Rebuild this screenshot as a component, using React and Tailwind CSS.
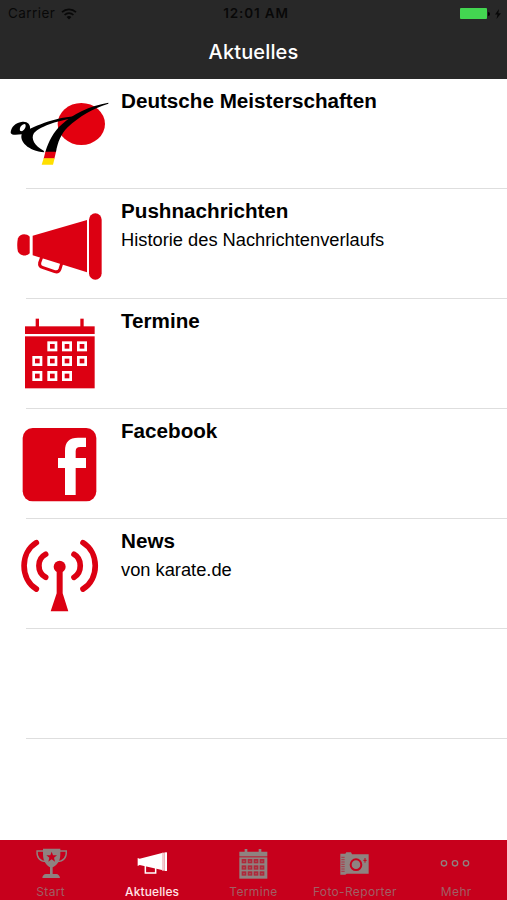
import React from "react";

function KarateLogo() {
  return (
    <svg className="w-[120px] h-[110px] shrink-0" viewBox="0 -33 360 330" aria-hidden="true">
      <ellipse cx="244" cy="102" rx="71" ry="63" fill="#e3000f" />
      <path
        fillRule="evenodd"
        d="M32 129 C32 111 47 97 68 95 C83 94 92 104 90 116 C87 126 78 134 66 133 C48 135 35 136 32 129 Z M60 122 C58 112 64 103 75 102 C80 108 75 119 66 124 Z"
        fill="#000"
      />
      <path d="M230 79 C180 80 107 104 66 130 C56 155 85 183 133 187 L131 182 C104 168 91 146 102 129 C123 107 181 90 224 84 Z" fill="#000" />
      <path d="M325 38 C270 47 216 73 186 103 C160 125 146 155 136 186 L168 186 C173 157 183 132 203 112 C239 78 277 56 325 41 Z" fill="#000" />
      <path d="M136 185 H168 L163 206 H131 Z" fill="#e3000f" />
      <path d="M131 205 H164 L159 224 H125 Z" fill="#ffdf00" />
    </svg>
  );
}

function MegaphoneIcon() {
  return (
    <svg className="w-[120px] h-[110px] shrink-0" viewBox="0 -33 360 330" fill="#dc0012" aria-hidden="true">
      <path d="M89 110 V160 C78 171 60 167 54 155 C51 145 51 125 54 115 C60 101 78 99 89 110 Z" />
      <path d="M98 107 L261 60 V217 L98 166 Z" />
      <path d="M125 172 L119 188 Q117 199 127 202 L164 215 Q176 218 180 207 L185 191" fill="none" stroke="#dc0012" strokeWidth="9" />
      <rect x="267" y="40" width="38" height="199" rx="19" />
    </svg>
  );
}

const CALENDAR_DAYS = [
  [142, 109], [186, 109], [231, 109],
  [97, 153], [142, 153], [186, 153], [231, 153],
  [97, 198], [142, 198], [186, 198],
];

function CalendarIcon() {
  return (
    <svg className="w-[120px] h-[110px] shrink-0" viewBox="0 -18 360 330" fill="#dc0012" aria-hidden="true">
      <rect x="107" y="41" width="10" height="26" />
      <rect x="241" y="41" width="10" height="26" />
      <rect x="75" y="64" width="209" height="23" />
      <rect x="75" y="94" width="209" height="156" />
      {CALENDAR_DAYS.map(([x, y]) => (
        <rect key={`${x}-${y}`} x={x + 4} y={y + 4} width="22" height="22" stroke="#fff" strokeWidth="8" />
      ))}
    </svg>
  );
}

function FacebookIcon() {
  return (
    <svg className="w-[120px] h-[110px] shrink-0" viewBox="0 -18 360 330" aria-hidden="true">
      <rect x="68" y="39" width="221" height="220" rx="30" fill="#dc0012" />
      <path d="M195 240 V159 H174 V129 H195 V108 C195 80 208 68 234 68 H258 V96 H241 C231 96 227 100 227 109 V129 H258 V159 H227 V240 Z" fill="#fff" />
    </svg>
  );
}

function AntennaIcon() {
  return (
    <svg className="w-[120px] h-[110px] shrink-0" viewBox="0 -18 360 330" fill="#dc0012" aria-hidden="true">
      <circle cx="179" cy="125" r="18" />
      <path d="M170 135 H188 V205 L205 259 H152 L170 205 Z" />
      <g fill="none" stroke="#dc0012" strokeWidth="17" strokeLinecap="round">
        <path d="M109 53 C60 83 60 162 109 192" />
        <path d="M137 88 C110 102 110 142 137 157" />
        <path d="M249 53 C298 83 298 162 249 192" />
        <path d="M222 88 C247 102 247 142 222 157" />
      </g>
    </svg>
  );
}

function TrophyTab() {
  return (
    <svg className="size-9" viewBox="0 0 108 108" aria-hidden="true">
      <path d="M30 11 H82 V27 C82 51 71 60 59 67 V87 H70 Q79 88 81 99 H28 Q29 88 39 87 H51 V67 C41 60 30 51 30 27 Z" fill="currentColor" />
      <path d="M31 18 H12 C11 38 22 49 40 50 M81 18 H100 C101 38 90 49 72 50" fill="none" stroke="currentColor" strokeWidth="4" />
      <path d="M56 20 L60 31 L72 31 L63 38 L66 50 L56 43 L46 50 L49 38 L40 31 L52 31 Z" fill="#c7001c" />
    </svg>
  );
}

function MegaphoneTab() {
  return (
    <svg className="size-9" viewBox="0 0 108 108" fill="currentColor" aria-hidden="true">
      <path d="M11 39 L17 41 L84 24 V75 L17 60 L11 63 Z" />
      <rect x="84" y="23" width="8" height="54" opacity="0.8" />
      <rect x="92" y="22" width="7" height="56" />
      <path d="M34 61 V84 H65 V69" fill="none" stroke="currentColor" strokeWidth="4.5" />
    </svg>
  );
}

function CalendarTab() {
  return (
    <svg className="size-9" viewBox="0 0 108 108" fill="currentColor" aria-hidden="true">
      <path d="M29 12 H37 V20 H71 V12 H79 V20 H97 V34 H13 V20 H29 Z" />
      <rect x="13" y="34" width="84" height="3" opacity="0.4" />
      <rect x="13" y="37" width="84" height="64" />
      {[42, 61, 79].map((y) =>
        [20, 38, 56, 74].map((x) => (
          <g key={`${x}-${y}`}>
            <rect x={x} y={y} width="14" height="13" fill="#b0283a" />
            <rect x={x + 5} y={y + 5} width="4" height="4" opacity="0.6" />
          </g>
        ))
      )}
    </svg>
  );
}

function CameraTab() {
  return (
    <svg className="size-9" viewBox="0 0 108 108" fill="currentColor" aria-hidden="true">
      <path d="M10 26 H25 L28 22 H42 L45 28 H95 V86 H29 L25 89 H10 Z" />
      <path d="M13 37 H23 M13 44 H23 M13 51 H23 M13 58 H23 M13 65 H23 M13 72 H23 M13 79 H23" stroke="#b0283a" strokeWidth="2.5" />
      <circle cx="57" cy="59" r="16" fill="none" stroke="#c7001c" strokeWidth="6" />
      <path d="M84 39 V53 M79 46 H89" stroke="#c7001c" strokeWidth="3" />
    </svg>
  );
}

function MoreTab() {
  return (
    <svg className="size-9" viewBox="0 0 108 108" fill="none" stroke="currentColor" strokeWidth="4" aria-hidden="true">
      <circle cx="18" cy="55" r="8" />
      <circle cx="51" cy="55" r="8" />
      <circle cx="84" cy="55" r="8" />
    </svg>
  );
}

const ITEMS = [
  { icon: KarateLogo, title: "Deutsche Meisterschaften" },
  { icon: MegaphoneIcon, title: "Pushnachrichten", desc: "Historie des Nachrichtenverlaufs" },
  { icon: CalendarIcon, title: "Termine" },
  { icon: FacebookIcon, title: "Facebook" },
  { icon: AntennaIcon, title: "News", desc: "von karate.de" },
];

const TABS = [
  { icon: TrophyTab, label: "Start" },
  { icon: MegaphoneTab, label: "Aktuelles", active: true },
  { icon: CalendarTab, label: "Termine" },
  { icon: CameraTab, label: "Foto-Reporter" },
  { icon: MoreTab, label: "Mehr" },
];

function StatusBar() {
  return (
    <div className="grid grid-cols-3 items-center h-[27px] pl-2 pr-[5px] text-[#080808] font-['Inter',sans-serif]">
      <div className="flex items-center gap-1.5">
        <span className="text-[13.5px] leading-none tracking-[0.45px]">Carrier</span>
        <svg className="w-4 h-3" viewBox="0 0 16 12" fill="none" stroke="currentColor" strokeWidth="1.7" aria-hidden="true">
          <path d="M1 4.2 C5 0.3 11 0.3 15 4.2" />
          <path d="M3.6 7 C6 4.6 10 4.6 12.4 7" />
          <path d="M8 11.5 L5.6 9 C7 7.7 9 7.7 10.4 9 Z" fill="currentColor" stroke="none" />
        </svg>
      </div>
      <span className="pl-0.5 text-center text-[13.5px] leading-none font-semibold tracking-[0.85px] whitespace-nowrap">12:01 AM</span>
      <div className="flex items-center justify-end">
        <div className="w-[27px] h-[11px] rounded-[1px] bg-[#43d651]" />
        <div className="w-0.5 h-1 ml-px mr-1 rounded-r bg-black" />
        <svg className="w-2 h-2.5" viewBox="0 0 8 10" fill="currentColor" aria-hidden="true">
          <path d="M5 0 L1 5.5 H3.5 L2.5 10 L7 4.2 H4.3 Z" />
        </svg>
      </div>
    </div>
  );
}

export default function App() {
  return (
    <div className="flex flex-col w-full h-[900px] bg-white overflow-hidden font-['Liberation_Sans',Arial,sans-serif]">
      <header className="h-[79px] shrink-0 bg-[#282828]">
        <StatusBar />
        <h1 className="h-[51px] text-center text-[20px] leading-[51px] font-medium tracking-[0.15px] text-white font-['Inter',sans-serif]">Aktuelles</h1>
      </header>

      <main className="flex-1 min-h-0">
        {ITEMS.map((item) => (
          <div key={item.title}>
            <div className="flex h-[109px] overflow-hidden">
              <item.icon />
              <div className="pt-[10px] pl-px text-black">
                <h2 className="text-[20.65px] leading-6 font-bold">{item.title}</h2>
                {item.desc && <p className="mt-[7px] text-[18.3px] leading-5">{item.desc}</p>}
              </div>
            </div>
            <div className="h-px ml-[26px] bg-[#dedede]" />
          </div>
        ))}
        <div className="h-[109px]" />
        <div className="h-px ml-[26px] bg-[#dedede]" />
      </main>

      <nav className="grid grid-cols-5 h-[60px] shrink-0 bg-[#c7001c] font-['Inter',sans-serif]">
        {TABS.map((tab) => (
          <div key={tab.label} className={`flex flex-col items-center pt-[5px] ${tab.active ? "text-white" : "text-[#8f8280]"}`}>
            <tab.icon />
            <span className={`mt-1 text-[12px] leading-[14px] whitespace-nowrap ${tab.active ? "text-[#ffe3e7] font-medium tracking-[0.1px]" : "text-[#a15f64] tracking-[0.35px]"}`}>
              {tab.label}
            </span>
          </div>
        ))}
      </nav>
    </div>
  );
}
